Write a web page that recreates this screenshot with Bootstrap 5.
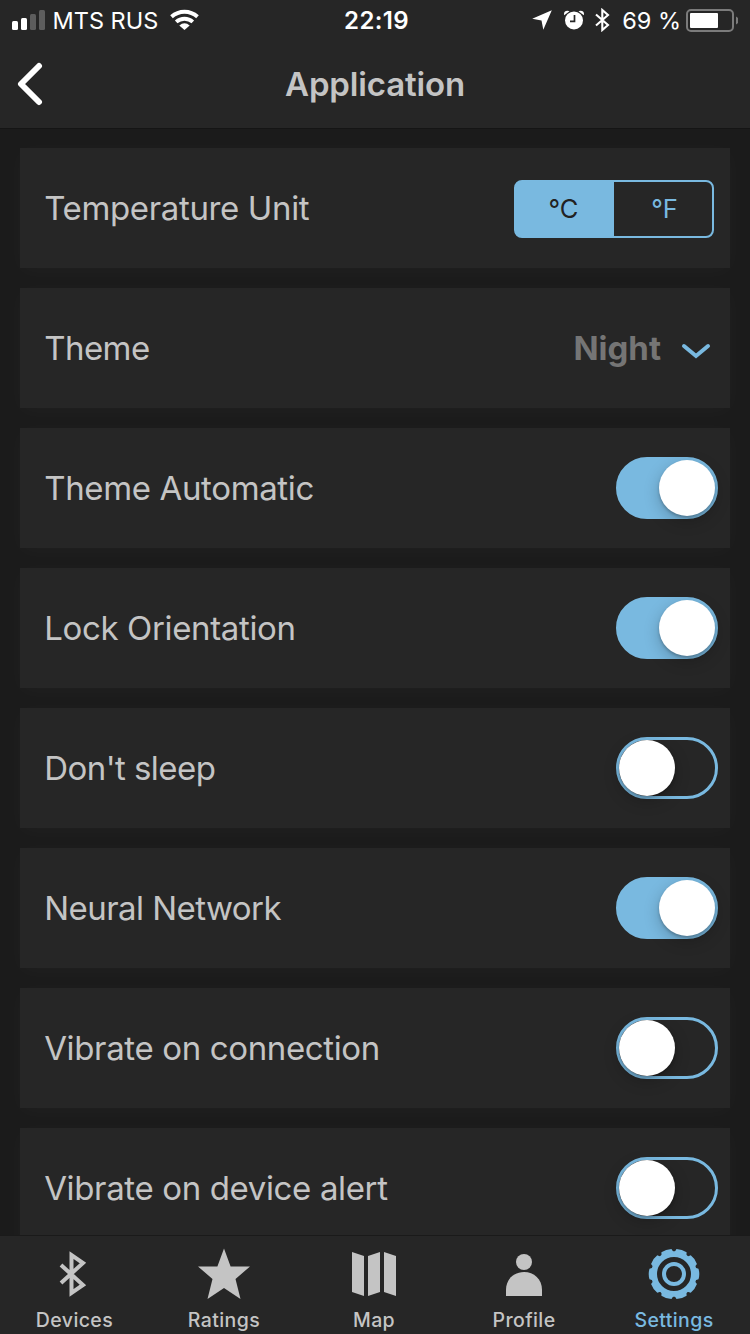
<!DOCTYPE html>
<html lang="en">
<head>
<meta charset="utf-8">
<meta name="viewport" content="width=device-width, initial-scale=1">
<title>Application</title>
<link href="https://cdn.jsdelivr.net/npm/bootstrap@5.3.0/dist/css/bootstrap.min.css" rel="stylesheet">
<style>
:root{--accent:#79b9e0;--panel:#262626;--ink:#c4c4c4}
body{width:750px;height:1334px;overflow:hidden;background:#1b1b1b;color:var(--ink);font-family:Inter,"Liberation Sans",sans-serif;line-height:1}
svg{display:block;flex:none}
.top-area{height:129px;background:var(--panel);border-bottom:1px solid #151515}
.status{height:40px;color:#fff;font-size:23.5px;display:grid;grid-template-columns:1fr auto 1fr;padding:0 12px 0 12px}
.status span{padding-top:2px}
.carrier{margin:0 12px 0 6.5px}
.battery{margin:0 5px 0 12px}
.clock{font-weight:600;letter-spacing:.35px;font-size:24px;padding:2px 0 0 3px}
.alarm{margin:0 11px 0 12px}
.title-row{height:88px;display:grid;grid-template-columns:60px 1fr 60px}
.title-row svg{margin-left:16px}
.title-row h1{font-size:33px;font-weight:600;letter-spacing:-.15px;padding-top:2px}
.settings{gap:20px;padding:19px 20px 0;min-height:0}
.setting{height:120px;flex:none;background:var(--panel);padding:0 12px 0 25px;border:0;border-radius:0;box-shadow:0 3px 20px rgba(255,255,255,.026);font-size:33px;color:var(--ink)}
.setting>span{letter-spacing:-.36px;margin-left:-.8px}
.setting>.tight{letter-spacing:-.55px}
.unit{width:200px;height:58px;border:2px solid var(--accent);border-radius:8px;margin:2px 4px 0 0;font-size:25.5px;background:linear-gradient(90deg,var(--accent) 50%,transparent 50%) border-box}
.unit .btn{border:0;padding:0;font:inherit;color:var(--accent);flex:1}
.unit .btn.active{background:none;color:#222;padding-right:3px}
.unit .btn:last-child{padding-left:3px}
.value{font-weight:700;color:#757575}
.value-arrow{margin:5px 7px 0 20px}
.toggle{width:102px;height:62px;border:3px solid var(--accent);border-radius:31px}
.toggle span{width:56px;height:56px;border-radius:50%;background:#fff;box-shadow:0 5px 16px rgba(0,0,0,.22),0 2px 3px rgba(0,0,0,.22)}
.toggle.on{background:var(--accent);justify-content:flex-end}
.tabs{height:99px;flex:none;background:var(--panel);border-top:1px solid #1a1a1a;display:grid;grid-template-columns:149px repeat(4,150px)}
.tabs .nav-link{color:var(--ink);padding:12px 0 0;font-size:19.5px;font-weight:500;letter-spacing:.4px}
.tabs .nav-link.active{color:var(--accent)}
.tabs span{margin-top:9px;line-height:22px}
</style>
</head>
<body class="d-flex flex-column">
<header class="top-area flex-shrink-0">
  <div class="status align-items-center">
    <div class="d-flex align-items-center">
      <svg width="34" height="22" viewBox="0 0 34 22" fill="#fff"><rect y="12" width="6" height="9" rx="1.5"/><rect x="9" y="9" width="6" height="12" rx="1.5"/><g fill="#5d5d5d"><rect x="18" y="5" width="6" height="16" rx="1.5"/><rect x="27" y="1" width="6" height="20" rx="1.5"/></g></svg>
      <span class="carrier">MTS RUS</span>
      <svg width="30" height="22" viewBox="0 0 30 22" fill="none" stroke="#fff" stroke-width="3.9"><path d="M1.500 7.700C9 1 20 1 27.500 7.700M6.200 12.900C11 8.700 18 8.700 22.800 12.900"/><path d="M9.300 16.500Q14.500 12 19.700 16.500L14.500 21Z" fill="#fff" stroke="none"/></svg>
    </div>
    <div class="clock">22:19</div>
    <div class="d-flex align-items-center justify-content-end">
      <svg width="20" height="20" viewBox="0 0 20 20" fill="#fff"><path d="M19.800 .2 11.300 19.800 9.500 10.400 .2 8.700Z"/></svg>
      <svg class="alarm" width="20" height="20" viewBox="0 0 20 20" fill="#fff"><circle cx="10" cy="10.400" r="9"/><path d="M.2 5.200Q-.6 1.700 1.800 1T5.500 1.200ZM19.800 5.200Q20.600 1.700 18.200 1T14.500 1.200Z"/><path d="M10.500 5v6.300H6" fill="none" stroke="#262626" stroke-width="1.700"/></svg>
      <svg width="15" height="24" viewBox="0 0 15 24" fill="none" stroke="#fff" stroke-width="2.100"><path d="M1 6.500 13 17 7.300 22V2L13 7 1 17.500"/></svg>
      <span class="battery">69 %</span>
      <svg width="52" height="24" viewBox="0 0 52 24"><rect x="1" y="2" width="46" height="21" rx="4" fill="none" stroke="#7b7b7b" stroke-width="2"/><rect x="4" y="5" width="28" height="15" rx="1" fill="#fff"/><path d="M50 8.500q3 1.500 3 4t-3 4Z" fill="#7b7b7b"/></svg>
    </div>
  </div>
  <div class="title-row align-items-center">
    <svg width="28" height="44" viewBox="0 0 28 44" fill="none" stroke="#fff" stroke-width="6" stroke-linecap="round" stroke-linejoin="round"><path d="M23 4 5 22 23 40"/></svg>
    <h1 class="m-0 text-center">Application</h1>
  </div>
</header>
<main class="settings d-flex flex-column flex-grow-1 overflow-hidden">
  <div class="setting card flex-row align-items-center justify-content-between"><span>Temperature Unit</span>
    <div class="unit d-flex"><button class="btn active">°C</button><button class="btn">°F</button></div></div>
  <div class="setting card flex-row align-items-center justify-content-between"><span class="tight">Theme</span>
    <div class="d-flex align-items-center"><span class="value">Night</span><svg class="value-arrow" width="30" height="16" viewBox="0 0 30 16" fill="none" stroke="#79b9e0" stroke-width="4" stroke-linecap="round"><path d="M3 3 15 13 27 3"/></svg></div></div>
  <div class="setting card flex-row align-items-center justify-content-between"><span>Theme Automatic</span><div class="toggle on d-flex"><span></span></div></div>
  <div class="setting card flex-row align-items-center justify-content-between"><span>Lock Orientation</span><div class="toggle on d-flex"><span></span></div></div>
  <div class="setting card flex-row align-items-center justify-content-between"><span class="tight">Don't sleep</span><div class="toggle d-flex"><span></span></div></div>
  <div class="setting card flex-row align-items-center justify-content-between"><span class="tight">Neural Network</span><div class="toggle on d-flex"><span></span></div></div>
  <div class="setting card flex-row align-items-center justify-content-between"><span>Vibrate on connection</span><div class="toggle d-flex"><span></span></div></div>
  <div class="setting card flex-row align-items-center justify-content-between"><span>Vibrate on device alert</span><div class="toggle d-flex"><span></span></div></div>
</main>
<nav class="tabs nav">
  <a class="nav-link d-flex flex-column align-items-center"><svg width="52" height="52" viewBox="0 0 52 52" fill="none" stroke="#c4c4c4" stroke-width="4"><path d="M12 17 34 37 22.500 45V7L34 15 12 35"/></svg><span>Devices</span></a>
  <a class="nav-link d-flex flex-column align-items-center"><svg width="52" height="52" viewBox="0 0 52 52" fill="#c4c4c4"><path d="M26 .5 32.600 18.500H52L37.500 31 42.500 51 26 40 9.500 51 14.500 31 0 18.500H19.400Z"/></svg><span>Ratings</span></a>
  <a class="nav-link d-flex flex-column align-items-center"><svg width="52" height="52" viewBox="0 0 52 52" fill="#c4c4c4"><path d="M4 4 16 8V48L4 44ZM20 8 32 4V44L20 48ZM36 4 48 8V48L36 44Z"/></svg><span>Map</span></a>
  <a class="nav-link d-flex flex-column align-items-center"><svg width="52" height="52" viewBox="0 0 52 52" fill="#c4c4c4"><circle cx="26" cy="14" r="8"/><path d="M8 48V42C8 31 16 24 26 24S44 31 44 42V48Z"/></svg><span>Profile</span></a>
  <a class="nav-link active d-flex flex-column align-items-center"><svg width="52" height="52" viewBox="0 0 52 52" fill="none" stroke="#79b9e0"><circle cx="26" cy="26" r="19.900" stroke-width="5.800"/><circle cx="26" cy="26" r="10" stroke-width="4"/><g fill="#79b9e0" stroke="none"><path id="tooth" d="M19 6Q20.300 4 20.700 1.500Q26 -.1 31.300 1.500Q31.700 4 33 6Z" transform="rotate(18 26 26)"/><use href="#tooth" transform="rotate(36 26 26)"/><use href="#tooth" transform="rotate(72 26 26)"/><use href="#tooth" transform="rotate(108 26 26)"/><use href="#tooth" transform="rotate(144 26 26)"/><use href="#tooth" transform="rotate(180 26 26)"/><use href="#tooth" transform="rotate(216 26 26)"/><use href="#tooth" transform="rotate(252 26 26)"/><use href="#tooth" transform="rotate(288 26 26)"/><use href="#tooth" transform="rotate(324 26 26)"/></g></svg><span>Settings</span></a>
</nav>
<script src="https://cdn.jsdelivr.net/npm/bootstrap@5.3.0/dist/js/bootstrap.bundle.min.js"></script>
</body>
</html>
